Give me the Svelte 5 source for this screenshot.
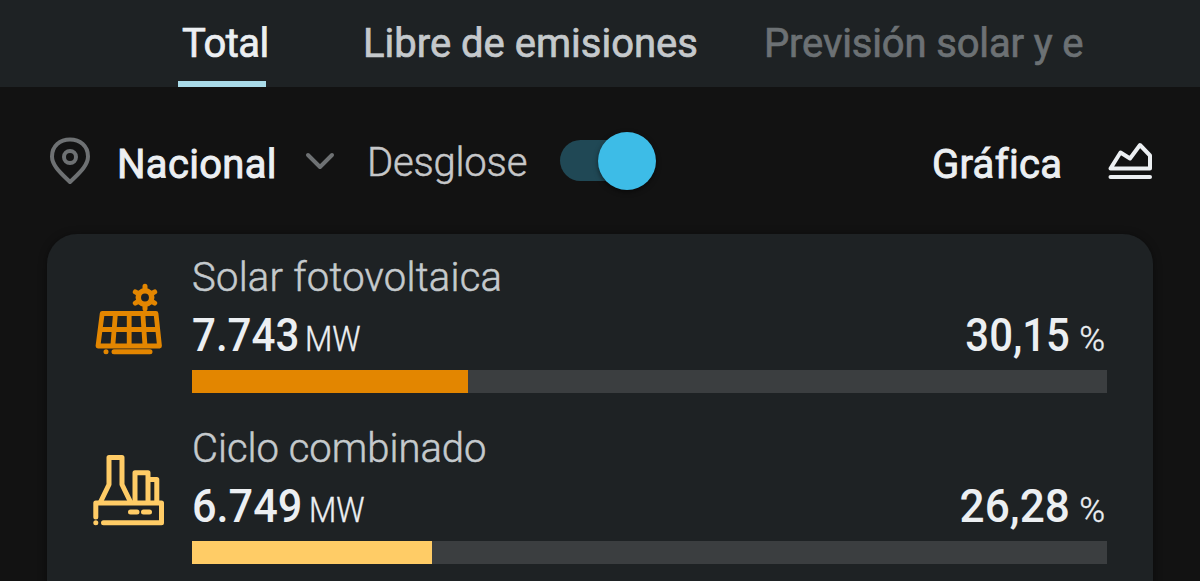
<script lang="ts">
  type Source = {
    id: string;
    name: string;
    power: string;
    share: number;
    color: string;
  };

  const tabs = ["Total", "Libre de emisiones", "Previsión solar y e"];
  let activeTab = $state(0);
  let breakdown = $state(true);

  const sources: Source[] = [
    { id: "solar", name: "Solar fotovoltaica", power: "7.743", share: 30.15, color: "#e38600" },
    { id: "ciclo", name: "Ciclo combinado", power: "6.749", share: 26.28, color: "#ffcc66" },
  ];

  // Spanish decimal comma
  function formatShare(value: number) {
    return value.toFixed(2).replace(".", ",");
  }
</script>

<div class="app">
  <nav class="tabs">
    {#each tabs as tab, i}
      <button
        type="button"
        class="tab tab-{i}"
        class:active={activeTab === i}
        onclick={() => (activeTab = i)}
      >
        <span>{tab}</span>
      </button>
    {/each}
  </nav>

  <div class="toolbar">
    <svg class="pin" viewBox="0 0 42 50" aria-hidden="true">
      <path d="M21 46C13 38 3 30 3 20.500C3 10 11 3.500 21 3.500S39 10 39 20.500C39 30 29 38 21 46Z" />
      <circle cx="21" cy="21" r="6" />
    </svg>
    <span class="region">Nacional</span>
    <svg class="chevron" viewBox="0 0 30 20" aria-hidden="true">
      <path d="M3 4L15 16L27 4" />
    </svg>
    <span class="breakdown">Desglose</span>
    <button
      type="button"
      class="switch"
      class:on={breakdown}
      aria-label="Desglose"
      onclick={() => (breakdown = !breakdown)}
    >
      <span class="track"></span>
      <span class="thumb"></span>
    </button>
    <span class="chart-label">Gráfica</span>
    <svg class="chart" viewBox="0 0 46 40" aria-hidden="true">
      <path d="M3.500 28.500L13.500 12.500L23 18.500L33 5L43 15.500V28.500Z" />
      <path d="M3.500 37H43" />
    </svg>
  </div>

  <section class="card">
    {#each sources as source}
      <div class="source">
        {#if source.id === "solar"}
          <svg class="icon" viewBox="0 0 76 76" fill="none" stroke={source.color} aria-hidden="true">
            <g stroke-width="4.800">
              <path d="M10.200 32.500H64L67.500 65H6Z" stroke-linejoin="round" />
              <path d="M7 48.500H67M23.500 32L20.800 65M37.200 32V65M50.800 32L53 65" />
            </g>
            <path d="M14 70.800H14.020M22 70.800H58" stroke-width="5" stroke-linecap="round" />
            <circle cx="53" cy="16.500" r="6.700" stroke-width="5.500" />
            <path
              d="M53 9V5.200M53 24V27.800M46.500 12.700L43.300 10.900M59.500 20.300L62.700 22.100M46.500 20.300L43.300 22.100M59.500 12.700L62.700 10.900"
              stroke-width="5"
              stroke-linecap="round"
            />
          </svg>
        {:else}
          <svg class="icon" viewBox="0 0 76 76" fill="none" stroke={source.color} aria-hidden="true">
            <g stroke-width="5" stroke-linecap="round" stroke-linejoin="round">
              <path d="M3.800 65V51H69.500V70.800H11.500M3.800 70.800H3.820" />
              <path d="M8.500 50L17 32.500V5.500H30V32.500L38.500 50" />
              <path d="M43 50V20.800H56V50M57 27.500H64.800V50" />
              <path d="M38.500 60H45M51.500 60H57.500" />
            </g>
          </svg>
        {/if}
        <div class="data">
          <div class="name {source.id}">{source.name}</div>
          <div class="values">
            <span class="number power {source.id}">{source.power}</span>
            <span class="unit mw">MW</span>
            <span class="number share {source.id}">{formatShare(source.share)}</span>
            <span class="unit percent">%</span>
          </div>
          <div class="bar">
            <div class="fill" style="width: {source.share}%; background: {source.color}"></div>
          </div>
        </div>
      </div>
    {/each}
  </section>
</div>

<style>
  :global(body) {
    background: #121212;
  }

  .app {
    width: 1200px;
    height: 581px;
    overflow: hidden;
    background: #121212;
    color: #eceff2;
    font-family: Roboto, "Liberation Sans", sans-serif;
    font-size: 40px;
    line-height: 48px;
    white-space: nowrap;
  }

  button {
    padding: 0;
    border: 0;
    background: none;
    font: inherit;
    color: inherit;
    text-align: left;
    cursor: pointer;
  }

  .tabs {
    display: flex;
    box-sizing: border-box;
    height: 87px;
    padding-left: 178px;
    background: #1e2224;
  }

  .tab {
    box-sizing: border-box;
    height: 87px;
    padding: 6px 0 0 3px;
    border-bottom: 6px solid transparent;
    color: #c5c9cc;
    -webkit-text-stroke: 0.7px currentColor;
  }

  .tab-0 {
    width: 88px;
    padding-left: 4px;
    letter-spacing: -0.5px;
  }

  .tab-1 {
    width: 340px;
    margin-left: 94px;
  }

  .tab-2 {
    margin-left: 61px;
    color: #6c7174;
    letter-spacing: -0.15px;
  }

  .tab.active {
    border-bottom-color: #a9dbe9;
    color: #eceff2;
  }

  .toolbar {
    display: flex;
    align-items: flex-start;
    box-sizing: border-box;
    height: 147px;
    padding: 45px 47px 0 49px;
  }

  .toolbar svg,
  .icon {
    flex: none;
  }

  .toolbar path,
  .toolbar circle {
    fill: none;
    stroke-width: 4px;
    stroke-linecap: round;
    stroke-linejoin: round;
  }

  .pin {
    width: 42px;
    height: 50px;
    margin-top: 4px;
    stroke: #6e7173;
  }

  .region {
    width: 188px;
    margin: 9px 0 0 26px;
    letter-spacing: 0.3px;
    -webkit-text-stroke: 0.9px currentColor;
  }

  .chevron {
    width: 30px;
    height: 20px;
    margin-top: 19px;
    stroke: #6e7173;
  }

  .breakdown {
    width: 193px;
    margin: 7px 0 0 32px;
    color: #c6c7c9;
    font-weight: 300;
    letter-spacing: -0.2px;
    -webkit-text-stroke: 0.5px currentColor;
  }

  .switch {
    display: flex;
    align-items: center;
    width: 97px;
    height: 58px;
  }

  .track {
    width: 80px;
    height: 41px;
    margin: 0 -80px 2px 0;
    border-radius: 21px;
    background: #204855;
  }

  .thumb {
    width: 58px;
    height: 58px;
    border-radius: 50%;
    background: #3dbce7;
    box-shadow: 0 2px 5px rgba(0, 0, 0, 0.5);
  }

  .switch.on .thumb {
    margin-left: 38px;
  }

  .chart-label {
    margin: 9px 0 0 auto;
    width: 175px;
    letter-spacing: 0.3px;
    -webkit-text-stroke: 0.9px currentColor;
  }

  .chart {
    width: 46px;
    height: 40px;
    margin-top: 8px;
    stroke: #eceff2;
  }

  .card {
    box-sizing: border-box;
    height: 400px;
    margin: 0 47px;
    padding: 19px 46px 0 45px;
    border-radius: 30px;
    background: #1e2224;
    box-shadow: 0 1px 8px rgba(0, 0, 0, 0.4);
  }

  .source {
    display: flex;
    height: 171px;
  }

  .icon {
    width: 76px;
    height: 76px;
    margin-top: 28px;
  }

  .data {
    flex: 1;
    margin-left: 24px;
  }

  .name {
    padding-top: 1px;
    color: #c5cacd;
    font-weight: 300;
    letter-spacing: 0.25px;
    -webkit-text-stroke: 0.5px currentColor;
  }

  .name.ciclo {
    letter-spacing: 0;
  }

  .values {
    display: flex;
    align-items: baseline;
    height: 60px;
    margin: 3px 0 5px;
    line-height: 60px;
  }

  .number {
    font-size: 46px;
    font-weight: 500;
  }

  /* condensed figures */
  .power {
    transform: scaleX(0.915);
    transform-origin: left;
  }

  .power.ciclo {
    margin-right: 4px;
    transform: scaleX(0.94);
  }

  .unit {
    font-size: 35px;
    font-weight: 300;
    -webkit-text-stroke: 0.4px currentColor;
  }

  .mw {
    margin-left: -4px;
    transform: scaleX(0.9);
    transform-origin: left;
  }

  .share {
    margin-left: auto;
    transform: scaleX(0.91);
    transform-origin: right;
  }

  .share.ciclo {
    transform: scaleX(0.96);
  }

  .percent {
    margin: 0 2px 0 9px;
  }

  .bar {
    height: 23px;
    background: #3b3e40;
  }

  .fill {
    height: 100%;
  }
</style>
